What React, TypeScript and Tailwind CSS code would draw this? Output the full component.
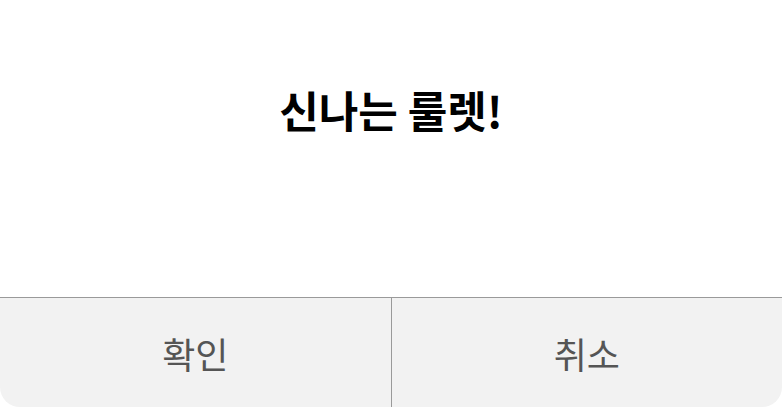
export default function App() {
  return (
    <div
      className="flex h-[407px] w-[782px] flex-col overflow-hidden rounded-b-[20px] bg-white"
      style={{ fontFamily: '"Noto Sans CJK KR", "Noto Sans", sans-serif' }}
    >
      <div className="flex h-[297px] justify-center pt-[80px]">
        <h1 className="text-[43px] font-semibold leading-[58px] text-black">신나는 룰렛!</h1>
      </div>
      <div className="flex flex-1 border-t border-[#9a9a9a] bg-[#f2f2f2]">
        <button className="flex flex-1 items-center justify-center border-r border-[#9a9a9a] text-[36px] font-normal text-[#555555]">
          확인
        </button>
        <button className="flex flex-1 items-center justify-center text-[36px] font-normal text-[#555555]">
          취소
        </button>
      </div>
    </div>
  );
}
